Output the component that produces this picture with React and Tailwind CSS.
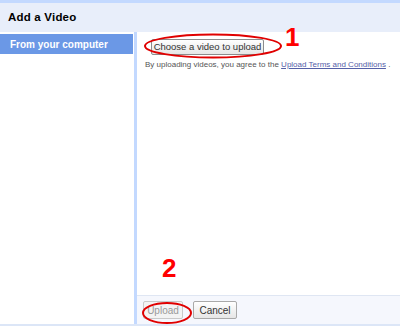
export default function App() {
  return (
    <div className="relative w-[400px] h-[328px] bg-white font-['Liberation_Sans',Arial,sans-serif] overflow-hidden">
      <div className="h-[3px] bg-[#c3d9ff]" />
      <div className="h-[29px] bg-[#e8eefa] flex items-center pl-[8px] text-[11.5px] text-black font-semibold tracking-[0.2px]">
        Add a Video
      </div>
      <div className="flex h-[294px] border-b-[2px] border-[#dce6f7]">
        <div className="w-[137px] pt-[2px] border-r-[3px] border-[#c3d9ff] pr-[1px]">
          <div className="h-[20px] bg-[#6b98e6] text-white font-bold text-[10px] flex items-center pl-[10px]">
            From your computer
          </div>
        </div>
        <div className="flex-1 flex flex-col">
          <div className="flex-1 pl-[14px] pt-[7px]">
            <button className="block h-[16px] w-[113px] border border-[#8c8c8c] rounded-[2px] bg-gradient-to-b from-white to-[#e6e6e6] text-[9.5px] text-[#333] leading-none">
              Choose a video to upload
            </button>
            <p className="mt-[4px] -ml-[6px] text-[8px] leading-[12px] text-[#555] whitespace-nowrap">
              By uploading videos, you agree to the{' '}
              <span className="text-[#5560a8] underline">Upload Terms and Conditions</span> .
            </p>
          </div>
          <div className="h-[29px] bg-[#f5f7fd] border-t border-[#dfe6f3] flex items-center gap-[10px] pl-[6px]">
            <button className="h-[18px] w-[40px] border border-[#c9c9c9] rounded-[2px] bg-[#f3f3f3] text-[10px] text-[#999]">
              Upload
            </button>
            <button className="h-[18px] w-[44px] border border-[#a9a9a9] rounded-[2px] bg-gradient-to-b from-white to-[#e6e6e6] text-[10px] text-[#333]">
              Cancel
            </button>
          </div>
        </div>
      </div>
      <svg className="absolute inset-0 pointer-events-none" width="400" height="328">
        <ellipse cx="213" cy="46" rx="68" ry="11.5" fill="none" stroke="#e00000" strokeWidth="2" />
        <ellipse cx="167" cy="313" rx="24" ry="10" fill="none" stroke="#e00000" strokeWidth="2" />
      </svg>
      <div className="absolute left-[285px] top-[24px] text-[26px] font-bold text-[#ff0000] leading-none">1</div>
      <div className="absolute left-[162px] top-[255px] text-[26px] font-bold text-[#ff0000] leading-none">2</div>
    </div>
  )
}
